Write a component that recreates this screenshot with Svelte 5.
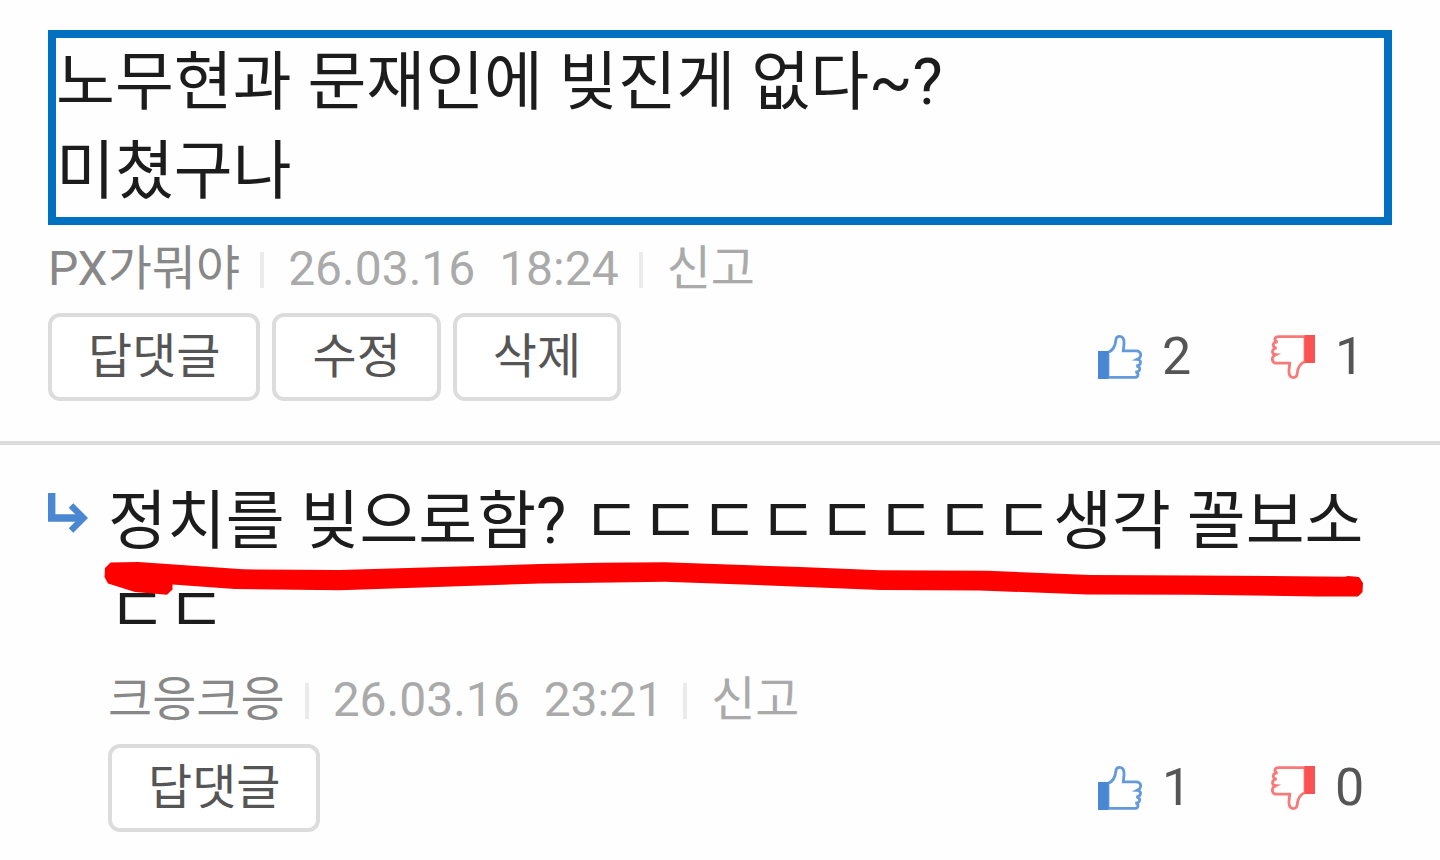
<script lang="ts">
  type Comment = {
    id: number;
    lines: string[];
    author: string;
    date: string;
    actions: string[];
    up: number;
    down: number;
    reply?: boolean;
  };

  const comments: Comment[] = [
    {
      id: 1,
      lines: ['노무현과 문재인에 빚진게 없다~?', '미쳤구나'],
      author: 'PX가뭐야',
      date: '26.03.16  18:24',
      actions: ['답댓글', '수정', '삭제'],
      up: 2,
      down: 1
    },
    {
      id: 2,
      lines: ['정치를 빚으로함? ㄷㄷㄷㄷㄷㄷㄷㄷ생각 꼴보소', 'ㄷㄷ'],
      author: '크응크응',
      date: '26.03.16  23:21',
      actions: ['답댓글'],
      up: 1,
      down: 0,
      reply: true
    }
  ];

  const hand =
    'M10 17.5C15 15.500 17.300 11 17.800 5.500C18 2.500 19.500 1.400 21.800 1.400C25 1.400 26.300 4.500 26 9L25.300 15.800H38.500C42.500 16 43.800 20 41.500 23L39 24.300C43 24.500 43.500 28.500 40.800 30.200L38.500 31C42.500 31.500 42.500 35.500 40 36.600L37.500 37.200C41.500 38 40.500 42.400 36.500 42.400H10Z';
</script>

<main>
  {#each comments as comment (comment.id)}
    <article class="comment" class:reply={comment.reply}>
      {#if comment.reply}
        <svg class="arrow" viewBox="0 0 40 42" width="40" height="42">
          <path d="M3.7 0V25H36" fill="none" stroke="#4a87d2" stroke-width="7.4" />
          <path d="M23 12.5L35.5 25L23 37.5" fill="none" stroke="#4a87d2" stroke-width="6.4" />
        </svg>
      {/if}

      <div class="content">
        <div class="text" class:boxed={!comment.reply}>
          {#each comment.lines as line}
            <p>{line}</p>
          {/each}
          {#if comment.reply}
            <svg class="marker" viewBox="104 560 1260 38" width="1260" height="38">
              <path
                fill="#ff0000"
                d="M110.5 562.4L138 562L243 569.3L340 570L540 564L600 562.8L665 562.2L800 567L880 570.3L987 570.7L1090 575L1193 575.4L1345 576.7L1348 576L1359 577L1363 583L1362.500 592L1358 596.600L1317 596.500L1193 594.700L1087 594.500L980 590.500L880 590L800 586.700L665 581.700L540 583.400L340 590.200L235 589L172.500 584.600V589.500L167 594.700L135 592L108 583.500L104.500 577L105 568Z"
              />
            </svg>
          {/if}
        </div>

        <div class="meta">
          <span class="author">{comment.author}</span>
          <span class="date">{comment.date}</span>
          <span class="report">신고</span>
        </div>

        <div class="footer">
          <div class="actions">
            {#each comment.actions as action}
              <button>{action}</button>
            {/each}
          </div>
          <div class="votes">
            <span class="vote">
              <svg viewBox="0 0 44 44" width="44" height="44">
                <path d={hand} fill="#fff" stroke="#6499dc" stroke-width="2.8" />
                <path d="M0 16H10.500V44H0Z" fill="#4a87d2" />
              </svg>
              <b>{comment.up}</b>
            </span>
            <span class="vote">
              <svg viewBox="0 0 44 44" width="44" height="44">
                <g transform="rotate(180 22 22)">
                  <path d={hand} fill="#fff" stroke="#f97878" stroke-width="2.8" />
                  <path d="M0 16H10.500V44H0Z" fill="#fa5252" />
                </g>
              </svg>
              <b>{comment.down}</b>
            </span>
          </div>
        </div>
      </div>
    </article>
  {/each}
</main>

<style>
  :global(body) {
    background: #fefefe;
  }

  main {
    width: 1440px;
    height: 860px;
    overflow: hidden;
    font-family: Roboto, 'Noto Sans CJK KR', sans-serif;
  }

  .comment {
    box-sizing: border-box;
    display: flex;
    padding: 30px 48px 40px;
  }

  .comment.reply {
    border-top: 4px solid #dcdcdc;
  }

  .arrow {
    flex: none;
    margin: 18px 20px 0 0;
  }

  .content {
    flex: 1;
    min-width: 0;
  }

  .text {
    position: relative;
    color: #1c1c1c;
    font-size: 64px;
    line-height: 89px;
  }

  .text.boxed {
    box-sizing: border-box;
    height: 195px;
    border: 8px solid #0070c0;
  }

  .text p {
    margin: 0;
    white-space: nowrap;
  }

  .reply .text {
    box-sizing: border-box;
    height: 181px;
    padding-top: 2px;
  }

  .marker {
    position: absolute;
    left: -4px;
    top: 85px;
  }

  .meta {
    display: flex;
    align-items: center;
    height: 88px;
    color: #aaa;
    font-size: 48px;
    line-height: 88px;
    white-space: pre;
  }

  .author {
    color: #888;
  }

  .date,
  .report {
    display: flex;
    align-items: center;
  }

  .date::before,
  .report::before {
    content: '';
    width: 4px;
    height: 36px;
    margin: 2px 24px 0 20px;
    background: #ebebeb;
  }

  .footer {
    display: flex;
    justify-content: space-between;
    height: 88px;
  }

  .actions {
    display: flex;
    gap: 12px;
  }

  button {
    box-sizing: border-box;
    height: 88px;
    padding: 0 36px;
    border: 4px solid #dcdcdc;
    border-radius: 12px;
    background: #fff;
    color: #555;
    font: 48px/76px Roboto, 'Noto Sans CJK KR', sans-serif;
  }

  .votes {
    display: flex;
    align-items: center;
  }

  .vote {
    display: flex;
    align-items: center;
    width: 173px;
  }

  .vote:last-child {
    width: 121px;
  }

  .vote b {
    margin-left: 20px;
    color: #555;
    font-size: 52px;
    font-weight: 400;
    line-height: 88px;
  }
</style>
